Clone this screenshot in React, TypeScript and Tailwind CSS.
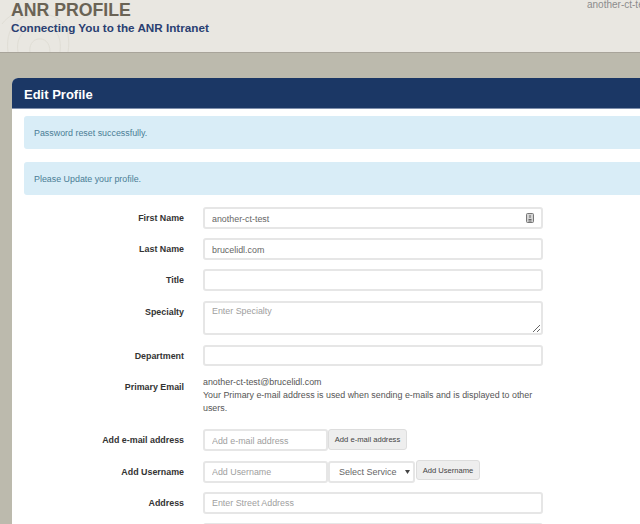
const font = "font-['Liberation_Sans',Arial,sans-serif]";
const inputCls =
  "block h-[22px] w-[340px] rounded-[3px] border-2 border-[#e6e6e6] bg-white px-[7px] pt-[2px] text-[8.9px] leading-none text-[#666] outline-none placeholder:text-[#a0a0a0]";

function Row({ label, className, children }: { label: string; className?: string; children: React.ReactNode }) {
  return (
    <div className={`flex items-start ${className ?? ""}`}>
      <label className="mr-[19px] w-[160px] pt-[5px] text-right text-[8.9px] font-bold leading-3 text-[#333]">
        {label}
      </label>
      {children}
    </div>
  );
}

function Alert({ text, className }: { text: string; className?: string }) {
  return (
    <div className={`h-[33px] w-[640px] rounded-[3px] bg-[#d9edf7] pl-[10px] pt-[11px] text-[8.9px] leading-3 text-[#4a7d96] ${className ?? ""}`}>
      {text}
    </div>
  );
}

export default function App() {
  return (
    <div className={`${font} h-[524px] w-[640px] overflow-hidden bg-[#bcbaad]`}>
      <header className="relative flow-root h-[53px] border-b border-[#a8a49a] bg-[#e9e7e1] pl-[11px]">
        <svg className="absolute left-0 top-0 opacity-40" width="72" height="52" viewBox="0 0 72 52" fill="none" stroke="#d4d1c5" strokeWidth="1">
          <path d="M8 52C6 38 10 24 22 18s30-6 40 4c6 6 8 18 6 30" />
          <path d="M18 52c-2-10 2-20 12-24s20-2 26 4c4 5 5 12 4 20" />
          <path d="M30 52c-1-6 2-12 8-13s12 3 12 13" />
          <path d="M2 24c6-8 14-12 24-14" />
        </svg>
        <h1 className="relative text-[17.7px] font-bold leading-[21px] text-[#6a6355]">ANR PROFILE</h1>
        <p className="relative -mt-px text-[11.7px] font-bold leading-[16px] text-[#2a4072]">
          Connecting You to the ANR Intranet
        </p>
        <span className="absolute left-[587px] top-0 whitespace-nowrap text-[10px] leading-[9px] text-[#8c8c8c]">
          another-ct-test
        </span>
      </header>

      <main className="ml-[12px] mt-[25px] h-[446px] w-[628px] overflow-hidden rounded-tl-[6px] bg-white">
        <div className="h-[31px] border-b border-[#7f8fac] bg-[#1b3765] pl-[12px] pt-[9px] text-[13px] font-bold leading-[15px] text-white">
          Edit Profile
        </div>
        <div className="pl-[12px] pt-[7px]">
          <Alert text="Password reset successfully." />
          <Alert text="Please Update your profile." className="mt-[13px]" />
        </div>

        <form className="mt-[12px] pl-[12px]">
          <Row label="First Name">
            <div className="relative">
              <input className={inputCls} defaultValue="another-ct-test" />
              <svg className="absolute left-[323px] top-[6px]" width="8" height="10" viewBox="0 0 8 10">
                <rect x="0.5" y="0.5" width="7" height="9" rx="1" fill="#d4d4d4" stroke="#777" />
                <path d="M4 2v3M2.5 6.5h3M2.5 8h3" stroke="#666" fill="none" />
              </svg>
            </div>
          </Row>
          <Row label="Last Name" className="mt-[9px]">
            <input className={inputCls} defaultValue="brucelidl.com" />
          </Row>
          <Row label="Title" className="mt-[9px]">
            <input className={inputCls} />
          </Row>
          <Row label="Specialty" className="mt-[10px]">
            <textarea
              className="block h-[34px] w-[340px] rounded-[3px] border-2 border-[#e6e6e6] bg-white px-[7px] py-[2px] text-[8.9px] leading-3 text-[#666] outline-none placeholder:text-[#a0a0a0]"
              placeholder="Enter Specialty"
            />
          </Row>
          <Row label="Department" className="mt-[10px]">
            <input className={`${inputCls} !h-[21px]`} />
          </Row>
          <Row label="Primary Email" className="mt-[10px]">
            <div className="w-[340px] text-[8.9px] leading-[13px] text-[#555]">
              <div>another-ct-test@brucelidl.com</div>
              <div>Your Primary e-mail address is used when sending e-mails and is displayed to other users.</div>
            </div>
          </Row>
          <Row label="Add e-mail address" className="mt-[14px]">
            <input className={`${inputCls} !w-[125px]`} placeholder="Add e-mail address" />
            <button type="button" className="h-[21px] w-[79px] rounded-[3px] border border-[#ddd] bg-[#eee] text-[7.6px] leading-none text-[#444]">
              Add e-mail address
            </button>
          </Row>
          <Row label="Add Username" className="mt-[10px]">
            <input className={`${inputCls} !w-[125px] !pt-0`} placeholder="Add Username" />
            <div className="relative">
              <select
                className="block h-[22px] w-[87px] appearance-none rounded-[3px] border-2 border-[#e6e6e6] bg-white pl-[9px] text-[9px] leading-none text-[#666] outline-none"
                defaultValue=""
              >
                <option value="">Select Service</option>
              </select>
              <svg className="absolute left-[77px] top-[9px]" width="5" height="4" viewBox="0 0 5 4">
                <path d="M0 0h5L2.5 4z" fill="#444" />
              </svg>
            </div>
            <button type="button" className="-mt-[1px] ml-[1px] h-[20px] w-[64px] rounded-[3px] border border-[#ddd] bg-[#eee] pt-[1px] text-[7.6px] leading-none text-[#444]">
              Add Username
            </button>
          </Row>
          <Row label="Address" className="mt-[9px]">
            <input className={`${inputCls} !pt-0`} placeholder="Enter Street Address" />
          </Row>
          <Row label="" className="mt-[9px]">
            <input className={inputCls} />
          </Row>
        </form>
      </main>
    </div>
  );
}
